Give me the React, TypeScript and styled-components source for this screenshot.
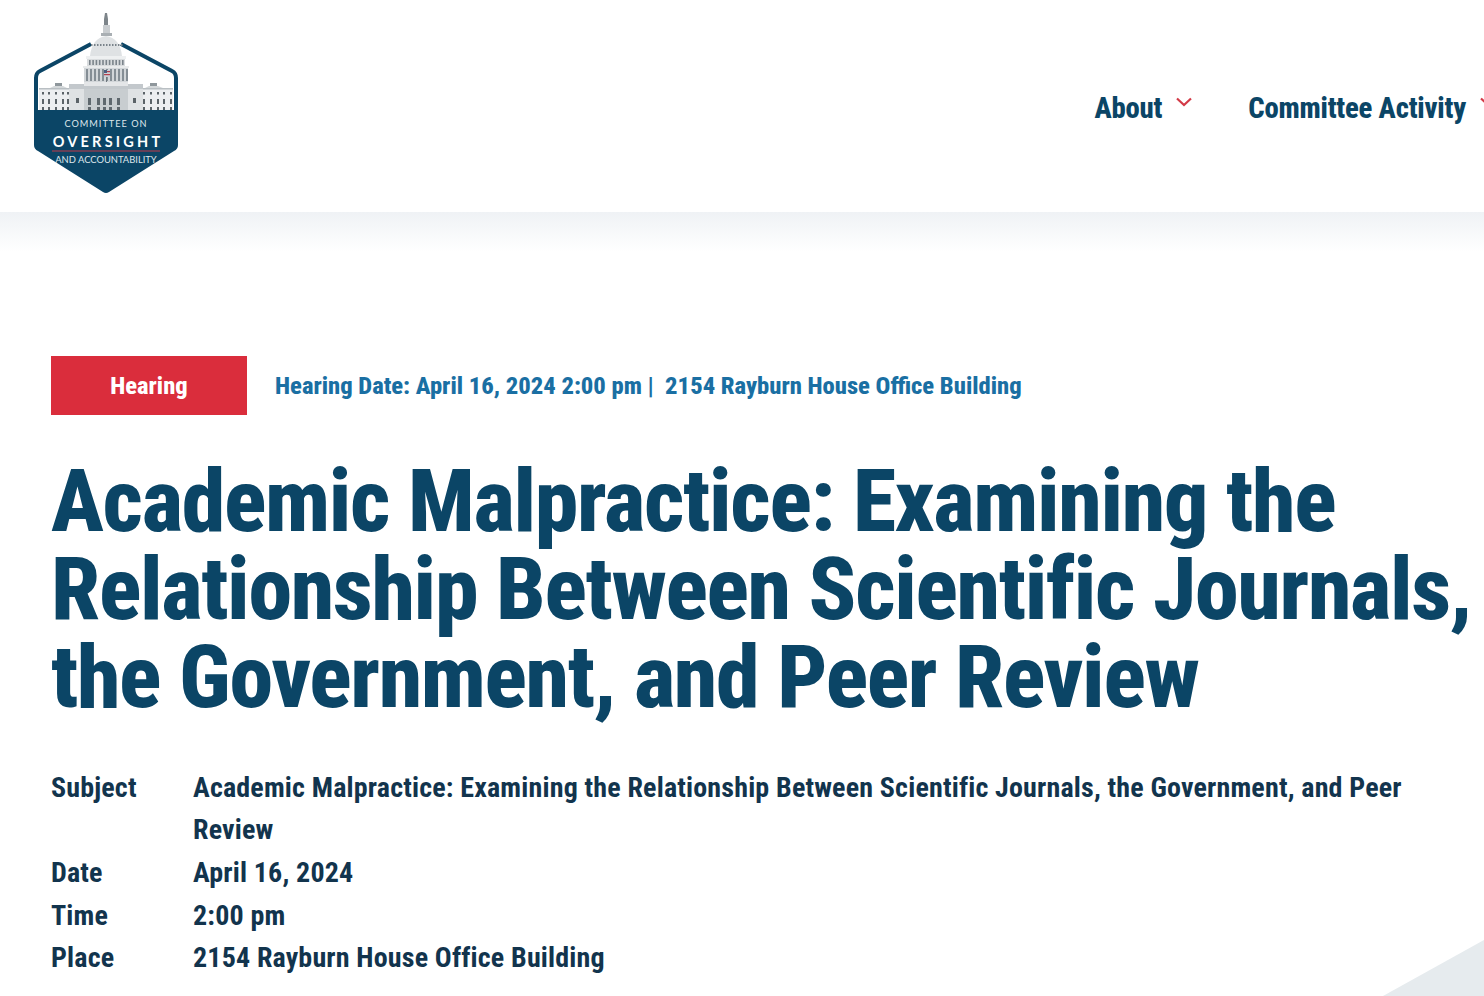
import styled, { createGlobalStyle } from 'styled-components'

const navy = '#0b4566'
const ink = '#12344d'
const red = '#da2d3c'

const GlobalStyle = createGlobalStyle`
  html, body {
    margin: 0;
    padding: 0;
    width: 1484px;
    height: 996px;
    overflow: hidden;
    background: #fff;
    font-family: Roboto, "Liberation Sans", sans-serif;
    font-stretch: 75%;
  }
  * { box-sizing: border-box; }
`

const Page = styled.div`
  position: relative;
  width: 1484px;
  height: 996px;
  overflow: hidden;
`

const Header = styled.header`
  height: 212px;
  padding: 13px 0 0 33px;
  display: flex;
  justify-content: space-between;
  background: #fff;
`

const Nav = styled.nav`
  display: flex;
  flex-wrap: nowrap;
  gap: 56px;
  padding-top: 77px;
  margin-right: -12px;
`

const NavItem = styled.a`
  display: flex;
  gap: 14px;
  height: 36px;
  font-size: 28.7px;
  line-height: 36px;
  font-weight: 800;
  letter-spacing: -0.2px;
  color: ${navy};
  white-space: nowrap;
`

const HeaderFade = styled.div`
  height: 40px;
  background: linear-gradient(#eff2f5, #fff);
`

const Main = styled.main`
  padding: 104px 0 0 51px;
`

const Meta = styled.div`
  display: flex;
  align-items: center;
  gap: 28px;
`

const Badge = styled.span`
  width: 196px;
  height: 59px;
  display: flex;
  align-items: center;
  justify-content: center;
  background: ${red};
  color: #fff;
  font-size: 24.5px;
  font-weight: 800;
`

const MetaText = styled.span`
  font-size: 24.6px;
  font-weight: 800;
  color: #1a6fa3;
  white-space: pre;
`

const Title = styled.h1`
  margin: 42px 0 0;
  font-size: 88px;
  line-height: 88px;
  font-weight: 800;
  letter-spacing: -1.32px;
  color: ${navy};
  white-space: nowrap;
`

const Details = styled.dl`
  margin: 45.8px 0 0;
  display: grid;
  grid-template-columns: 142px 1230px;
  font-size: 28px;
  line-height: 42.6px;
  font-weight: 700;
  letter-spacing: 0.17px;
  color: ${ink};
`

const Term = styled.dt`
  margin: 0;
`

const Value = styled.dd`
  margin: 0;
`

const Corner = styled.svg`
  position: absolute;
  right: 0;
  bottom: 0;
`

const columns = (from: number, to: number, step: number) => {
  const xs: number[] = []
  for (let x = from; x <= to; x += step) xs.push(x)
  return xs
}

const wingWindows = [9, 15, 22, 29, 34, 110, 117, 124, 130, 137]

const Logo = () => (
  <svg width="146" height="182" viewBox="0 0 146 182">
    <path d="M58 31 L7 58 Q3 60 3 65 L3 100 M88 31 L139 58 Q143 60 143 65 L143 100" fill="none" stroke="#0b4566" strokeWidth="4" />
    <path d="M1 97 H145 V132 Q145 136 141 138 L76 179 Q73 181 70 179 L5 138 Q1 136 1 132 Z" fill="#0b4566" />

    {/* capitol: dome */}
    <path d="M72 0 h2 l1 6 v6 h-4 v-6 Z" fill="#7d858a" />
    <rect x="70" y="12" width="7" height="10" fill="#c9cdd0" />
    <rect x="68" y="20" width="11" height="3" fill="#a9afb3" />
    <path d="M57 43 Q59 25 73 23 Q87 25 89 43 Z" fill="#dfe2e4" />
    {columns(58, 88, 3).map((x) => (
      <rect key={x} x={x} y="31" width="1.500" height="2" fill="#79828a" />
    ))}
    <rect x="53" y="43" width="40" height="3" fill="#eef0f1" />
    <rect x="54" y="46" width="38" height="7" fill="#d9dcde" />
    {columns(56, 90, 3.300).map((x) => (
      <rect key={x} x={x} y="47" width="1.600" height="5" fill="#7b848b" />
    ))}
    <rect x="50" y="53" width="46" height="2" fill="#e9ebec" />
    <rect x="51" y="55" width="44" height="14" fill="#d2d6d9" />
    {columns(53, 93, 4).map((x) => (
      <rect key={x} x={x} y="56" width="2" height="12" fill="#858e95" />
    ))}
    <rect x="71" y="57" width="6" height="7" fill="#c9ced6" />
    <rect x="71" y="57" width="3" height="3" fill="#4b5d80" />
    <rect x="74" y="58" width="3" height="1.200" fill="#b5404c" />
    <rect x="71" y="61" width="6" height="1.200" fill="#b5404c" />
    <rect x="73" y="64" width="1" height="6" fill="#6f787f" />

    {/* capitol: wings and centre block */}
    <rect x="6" y="76" width="134" height="21" fill="#eceef0" />
    <rect x="6" y="75" width="134" height="1.500" fill="#b9bfc3" />
    <path d="M17 75 L21 73 H30 L34 75 Z M112 75 L116 73 H125 L130 75 Z" fill="#d4d8da" />
    <rect x="22" y="70" width="7" height="3" fill="#8f979c" />
    <rect x="117" y="70" width="7" height="3" fill="#8f979c" />
    <rect x="36" y="71" width="74" height="5" fill="#c3c8cc" />
    <rect x="51" y="69" width="44" height="4" fill="#e4e6e8" />
    <rect x="36" y="76" width="74" height="21" fill="#dfe2e4" />
    <rect x="51" y="76" width="44" height="21" fill="#c8cdd0" />
    {wingWindows.map((x) => (
      <rect key={x} x={x} y="79" width="2" height="2.500" fill="#5b6368" />
    ))}
    {wingWindows.map((x) => (
      <rect key={x} x={x} y="86" width="2" height="5" fill="#5b6368" />
    ))}
    {wingWindows.map((x) => (
      <rect key={x} x={x} y="94" width="2" height="3" fill="#5b6368" />
    ))}
    {[55, 64, 70, 76, 84].map((x) => (
      <rect key={x} x={x} y="85" width="3" height="7" fill="#5f686e" />
    ))}
    {[55, 64, 70, 76, 84].map((x) => (
      <rect key={x} x={x} y="94" width="3" height="3" fill="#5f686e" />
    ))}
    <rect x="43" y="85" width="3" height="5" fill="#5b6368" />
    <rect x="100" y="85" width="3" height="5" fill="#5b6368" />

    <text x="73" y="114" textAnchor="middle" fontFamily="Lato, sans-serif" fontSize="9.200" letterSpacing="1" fill="#dfe7ec" style={{ fontStretch: '100%' }}>COMMITTEE ON</text>
    <text x="75" y="133.500" textAnchor="middle" fontFamily="Lato, sans-serif" fontSize="14.500" fontWeight="700" letterSpacing="3.200" fill="#fff" style={{ fontStretch: '100%' }}>OVERSIGHT</text>
    <rect x="19" y="137.500" width="108" height="1" fill="#c23a48" />
    <text x="73" y="150" textAnchor="middle" fontFamily="Lato, sans-serif" fontSize="9.400" fill="#dfe7ec" style={{ fontStretch: '100%' }}>AND ACCOUNTABILITY</text>
  </svg>
)

const Chevron = () => (
  <svg width="16" height="24" viewBox="0 0 16 24">
    <path d="M1 8.500 L8 15 L15 8.500" fill="none" stroke="#d33a47" strokeWidth="2.200" />
  </svg>
)

export default function App() {
  return (
    <Page>
      <GlobalStyle />
      <Header>
        <Logo />
        <Nav>
          <NavItem>About<Chevron /></NavItem>
          <NavItem>Committee Activity<Chevron /></NavItem>
        </Nav>
      </Header>
      <HeaderFade />
      <Main>
        <Meta>
          <Badge>Hearing</Badge>
          <MetaText>Hearing Date: April 16, 2024 2:00 pm |  2154 Rayburn House Office Building</MetaText>
        </Meta>
        <Title>
          Academic Malpractice: Examining the<br />
          Relationship Between Scientific Journals,<br />
          the Government, and Peer Review
        </Title>
        <Details>
          <Term>Subject</Term>
          <Value>Academic Malpractice: Examining the Relationship Between Scientific Journals, the Government, and Peer Review</Value>
          <Term>Date</Term>
          <Value>April 16, 2024</Value>
          <Term>Time</Term>
          <Value>2:00 pm</Value>
          <Term>Place</Term>
          <Value>2154 Rayburn House Office Building</Value>
        </Details>
      </Main>
      <Corner width="101" height="56" viewBox="0 0 101 56">
        <path d="M0 56 L101 0 V56 Z" fill="#e6ebee" />
      </Corner>
    </Page>
  )
}
